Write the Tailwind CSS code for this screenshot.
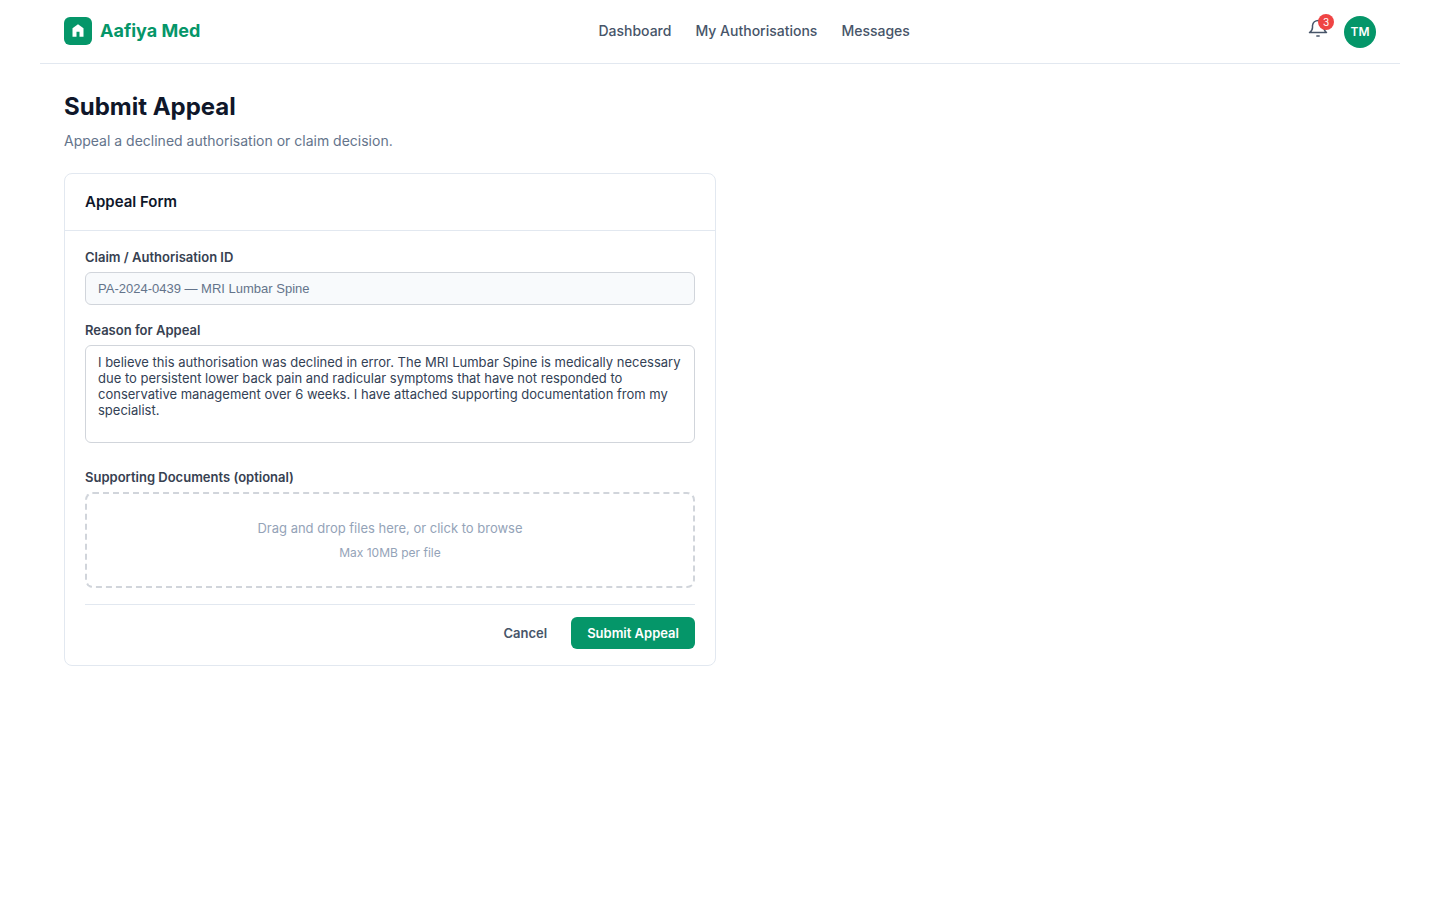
<!DOCTYPE html>
<html lang="en">

<head>
  <meta charset="UTF-8" />
  <meta name="viewport" content="width=device-width, initial-scale=1.0" />
  <title>Submit Appeal - Aafiya Med</title>
  <script src="https://cdn.jsdelivr.net/npm/@tailwindcss/browser@4"></script>
</head>

<body class="bg-white font-['Inter',sans-serif] text-[#0f172a]">
  <div class="max-w-[1360px] mx-auto">
    <header class="flex items-center justify-between h-16 px-6 border-b border-[#e2e8f0]">
      <a href="#" class="flex items-center gap-2 pb-0.5">
        <svg class="w-7 h-7" viewBox="0 0 28 28" fill="none">
          <rect width="28" height="28" rx="6" fill="#059669" />
          <path d="M14 7.200l-5.500 4V19.700h4v-5h3v5h4v-8.500z" fill="#fff" />
        </svg>
        <span class="text-lg font-bold text-[#059669]">Aafiya Med</span>
      </a>

      <nav class="flex gap-6 pb-0.5 text-sm font-medium text-[#475569]">
        <a href="#">Dashboard</a>
        <a href="#">My Authorisations</a>
        <a href="#">Messages</a>
      </nav>

      <div class="flex items-center gap-4">
        <button type="button" class="relative pb-2" aria-label="Notifications">
          <svg class="w-5 h-5" viewBox="0 0 20 20" fill="none" stroke="#475569" stroke-width="1.5" stroke-linejoin="round">
            <path d="M1.500 14.500h17c-1.500-1-2.500-2.500-2.500-5V7.500a5.800 5.800 0 0 0-11.500 0v2c0 2.500-1.500 4-3 5z" />
            <path d="M8.300 18h3.400" />
          </svg>
          <span class="absolute -top-1 -right-1.5 w-4 h-4 rounded-full bg-[#ef4444] text-white text-[10px] leading-4 text-center">3</span>
        </button>
        <span class="flex items-center justify-center w-8 h-8 rounded-full bg-[#059669] text-white text-xs font-semibold">TM</span>
      </div>
    </header>

    <main class="px-6 py-7">
      <h1 class="text-2xl font-bold leading-[30px]">Submit Appeal</h1>
      <p class="mt-2 text-sm leading-[22px] text-[#64748b]">Appeal a declined authorisation or claim decision.</p>

      <section class="mt-[21px] max-w-[652px] border border-[#e2e8f0] rounded-lg">
        <div class="px-5 py-4 border-b border-[#e2e8f0]">
          <h2 class="text-[15px] leading-6 font-semibold">Appeal Form</h2>
        </div>

        <form class="px-5 py-4 text-[13px]">
          <div class="mb-[15px]">
            <label for="claimId" class="block mb-1 leading-[21px] font-semibold text-[#374151]">Claim / Authorisation ID</label>
            <input id="claimId" type="text" readonly value="PA-2024-0439 — MRI Lumbar Spine"
              class="block w-full px-3 py-2 border border-[#d1d5db] rounded-md bg-[#f8fafc] font-['Liberation_Sans',sans-serif] leading-[15px] text-[#64748b]" />
          </div>

          <div class="mb-6">
            <label for="reason" class="block mb-1 leading-[21px] font-semibold text-[#374151]">Reason for Appeal</label>
            <textarea id="reason" rows="5"
              class="block w-full px-3 py-2 border border-[#d1d5db] rounded-md leading-4 text-[#334155] resize-none">I believe this authorisation was declined in error. The MRI Lumbar Spine is medically necessary due to persistent lower back pain and radicular symptoms that have not responded to conservative management over 6 weeks. I have attached supporting documentation from my specialist.</textarea>
          </div>

          <div class="mb-4">
            <label for="documents" class="block mb-1 leading-[21px] font-semibold text-[#374151]">Supporting Documents (optional)</label>
            <label for="documents" class="block p-6 border-2 border-dashed border-[#d1d5db] rounded-lg text-center text-[#94a3b8] cursor-pointer">
              <span class="block leading-[21px]">Drag and drop files here, or click to browse</span>
              <span class="block mt-1 text-xs leading-[19px]">Max 10MB per file</span>
            </label>
            <input id="documents" type="file" multiple class="sr-only" />
          </div>

          <div class="flex justify-end gap-2 pt-3 border-t border-[#e2e8f0]">
            <button type="button" class="px-4 py-2 rounded-md leading-4 font-semibold text-[#475569]">Cancel</button>
            <button type="submit" class="px-4 py-2 rounded-md bg-[#059669] leading-4 font-semibold text-white">Submit Appeal</button>
          </div>
        </form>
      </section>
    </main>
  </div>
</body>

</html>
